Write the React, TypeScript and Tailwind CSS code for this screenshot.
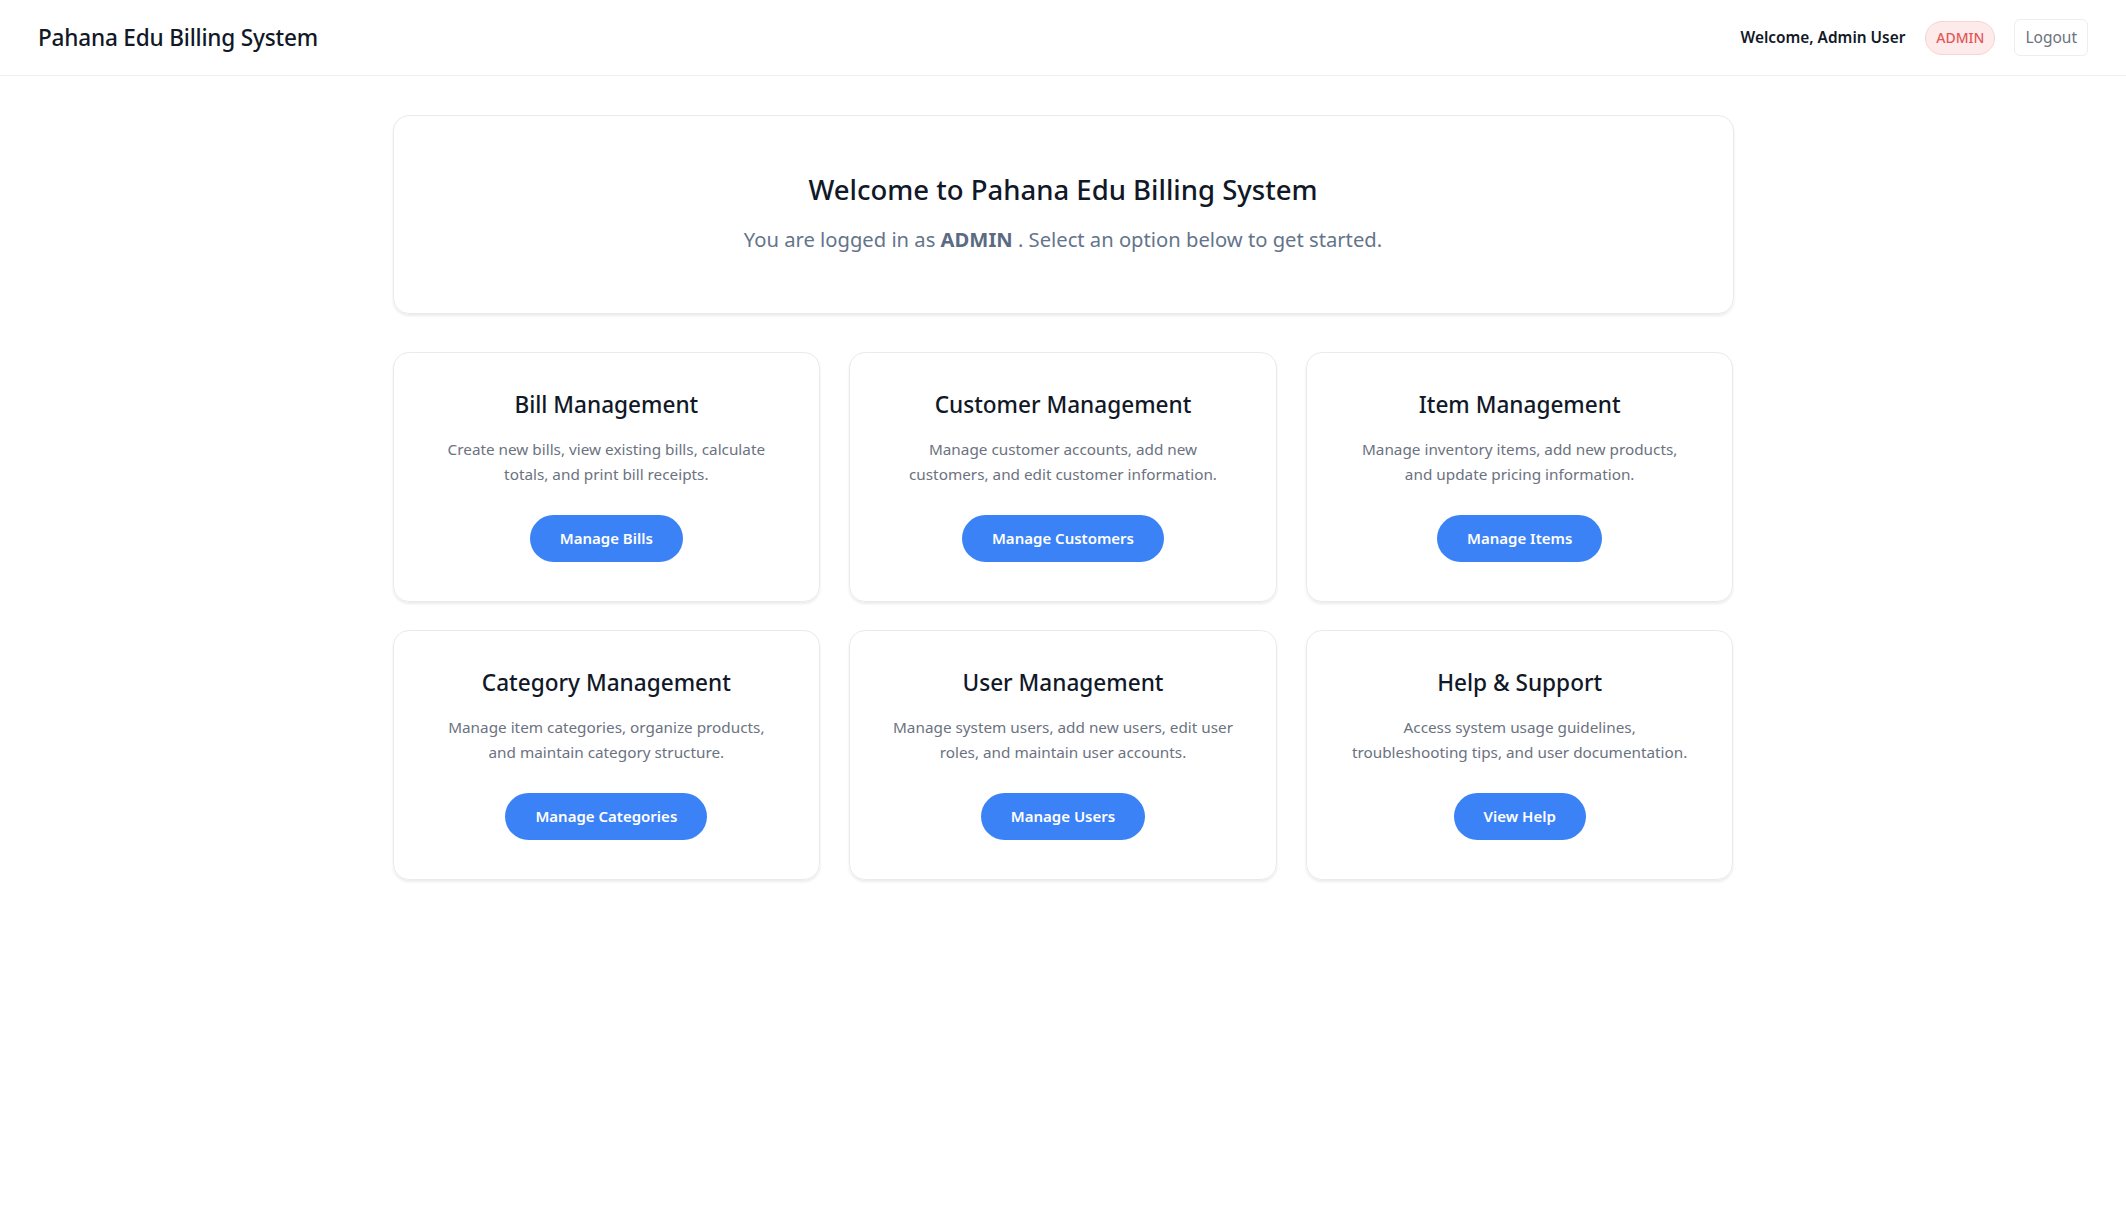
import React from "react";

const cards = [
  {
    title: "Bill Management",
    desc: "Create new bills, view existing bills, calculate totals, and print bill receipts.",
    action: "Manage Bills",
  },
  {
    title: "Customer Management",
    desc: "Manage customer accounts, add new customers, and edit customer information.",
    action: "Manage Customers",
  },
  {
    title: "Item Management",
    desc: "Manage inventory items, add new products, and update pricing information.",
    action: "Manage Items",
  },
  {
    title: "Category Management",
    desc: "Manage item categories, organize products, and maintain category structure.",
    action: "Manage Categories",
  },
  {
    title: "User Management",
    desc: "Manage system users, add new users, edit user roles, and maintain user accounts.",
    action: "Manage Users",
  },
  {
    title: "Help & Support",
    desc: "Access system usage guidelines, troubleshooting tips, and user documentation.",
    action: "View Help",
  },
];

export default function App() {
  return (
    <div className="min-h-screen bg-white text-[#111827] font-['Noto_Sans',sans-serif]">
      {/* Header */}
      <header className="h-[76px] flex items-center justify-between px-[38px] border-b border-[#eef0f3]">
        <h1 className="text-[22.6px] font-medium tracking-[-0.2px]">Pahana Edu Billing System</h1>
        <div className="flex items-center">
          <span className="text-[15.4px] font-semibold">Welcome, Admin User</span>
          <span className="ml-5 h-[34px] px-[10px] flex items-center rounded-full bg-[#fdeaea] border border-[#f8d4d4] text-[#e15858] text-[14px] font-medium">
            ADMIN
          </span>
          <button className="ml-[19px] h-[37px] px-[10px] rounded-md border border-[#eceef1] text-[#6b7280] text-[15.5px]">
            Logout
          </button>
        </div>
      </header>

      <main className="max-w-[1341px] mx-auto pt-[39px]">
        {/* Welcome */}
        <div className="rounded-2xl border border-[#e8eaee] shadow-[0_2px_3px_rgba(0,0,0,0.08)] text-center pt-[56px] pb-[60px] mb-[38px]">
          <h2 className="text-[27.5px] leading-9 font-medium">Welcome to Pahana Edu Billing System</h2>
          <p className="mt-[17px] text-[20.2px] leading-7 text-[#64748b]">
            You are logged in as <span className="font-bold text-[#5b6b82]">ADMIN</span> . Select an option below to get started.
          </p>
        </div>

        {/* Cards */}
        <div className="grid grid-cols-3 gap-x-[29px] gap-y-[28px]">
          {cards.map((c) => (
            <div
              key={c.title}
              className="rounded-2xl border border-[#e8eaee] shadow-[0_2px_3px_rgba(0,0,0,0.08)] text-center pt-9 pb-[39px] px-10 flex flex-col items-center"
            >
              <h3 className="text-[22.6px] leading-8 font-medium">{c.title}</h3>
              <p className="mt-4 text-[15.3px] leading-[25px] text-[#6b7280]">{c.desc}</p>
              <button className="mt-[28px] h-[47px] px-[30px] rounded-full bg-[#3b82f6] text-white text-[15px] font-semibold">
                {c.action}
              </button>
            </div>
          ))}
        </div>
      </main>
    </div>
  );
}
